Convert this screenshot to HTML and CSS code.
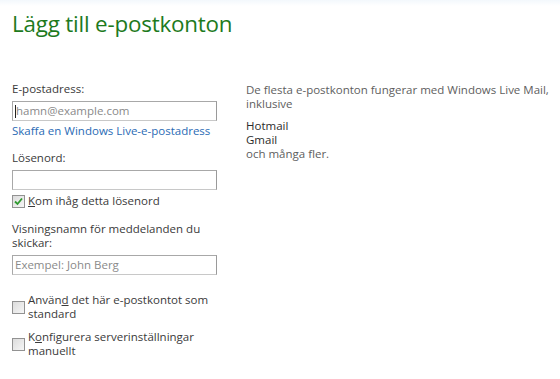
FILE: index.html
```html
<!DOCTYPE html>
<html lang="sv">
<head>
<meta charset="utf-8">
<link rel="stylesheet" href="styles.css">
</head>
<body>
<div class="page">
  <h1 class="title">Lägg till e-postkonton</h1>
  <div class="main">
    <div class="form">
      <div class="label first">E-postadress:</div>
      <div class="input"><span class="caret"></span><span class="ph">hamn@example.com</span></div>
      <a class="link" href="#">Skaffa en Windows Live-e-postadress</a>
      <div class="label pw">Lösenord:</div>
      <div class="input"></div>
      <div class="check single">
        <span class="box checked"><svg viewBox="0 0 9 9" width="9" height="9"><path d="M1 4.5 L3.5 7 L8 1.5" fill="none" stroke="#2f9a2f" stroke-width="1.8"/></svg></span>
        <span class="ctext"><u>K</u>om ihåg detta lösenord</span>
      </div>
      <div class="label disp">Visningsnamn för meddelanden du skickar:</div>
      <div class="input"><span class="ph">Exempel: John Berg</span></div>
      <div class="check opt1">
        <span class="box"></span>
        <span class="ctext">Använ<u>d</u> det här e-postkontot som standard</span>
      </div>
      <div class="check opt2">
        <span class="box"></span>
        <span class="ctext">K<u>o</u>nfigurera serverinställningar manuellt</span>
      </div>
    </div>
    <div class="info">
      <p class="intro">De flesta e-postkonton fungerar med Windows Live Mail, inklusive</p>
      <p class="services"><span class="svc">Hotmail</span><span class="svc">Gmail</span><span class="more">och många fler.</span></p>
    </div>
  </div>
</div>
</body>
</html>
```
FILE: styles.css
```css
html, body {
  margin: 0;
  padding: 0;
  background: #ffffff;
}
body {
  font-family: "Open Sans", "Noto Sans", sans-serif;
  font-size: 11.5px;
  line-height: 14px;
  color: #3a3a3a;
  background: linear-gradient(180deg, #f3f8fc 0, #ffffff 6px);
}
.page {
  padding: 9px 0 0 12px;
}
.title {
  margin: 0;
  font-weight: normal;
  font-size: 22.4px;
  line-height: 30px;
  color: #1d7a1d;
  letter-spacing: -0.2px;
}
.main {
  display: flex;
  gap: 29px;
  margin-top: 43px;
}
.form {
  width: 205px;
  flex: none;
  display: flex;
  flex-direction: column;
}
.label {
  color: #3a3a3a;
}
.input {
  box-sizing: border-box;
  height: 20px;
  border: 1px solid #a8a8a8;
  border-right-color: #9a9a9a;
  border-bottom-color: #c8c8c8;
  display: flex;
  align-items: center;
  padding-left: 2px;
  margin-top: 5px;
}
.caret {
  width: 1px;
  height: 13px;
  background: #222;
}
.ph {
  color: #8a8a8a;
}
.link {
  color: #2a6bb5;
  text-decoration: none;
  margin-top: 3px;
}
.pw {
  margin-top: 13px;
}
.check {
  display: flex;
  align-items: flex-start;
  gap: 3px;
}
.single {
  margin-top: 4px;
}
.box {
  box-sizing: border-box;
  width: 13px;
  height: 13px;
  border: 1px solid #929292;
  background: linear-gradient(135deg, #dcdcdc 0%, #f6f6f6 100%);
  flex: none;
  margin-top: 1px;
  display: flex;
  align-items: center;
  justify-content: center;
}
.check.opt1 .box, .check.opt2 .box {
  margin-top: 8px;
}
.ctext u {
  text-decoration: underline;
}
.disp {
  margin-top: 14px;
}
.opt1 {
  margin-top: 18px;
}
.opt2 {
  margin-top: 9px;
}
.info {
  flex: 1;
  padding-top: 1px;
  color: #5e5e5e;
}
.info p {
  margin: 0;
}
.services {
  display: flex;
  flex-direction: column;
  margin-top: 8px !important;
}
.svc {
  color: #2c2c2c;
}
.more {
  color: #5e5e5e;
}
```
